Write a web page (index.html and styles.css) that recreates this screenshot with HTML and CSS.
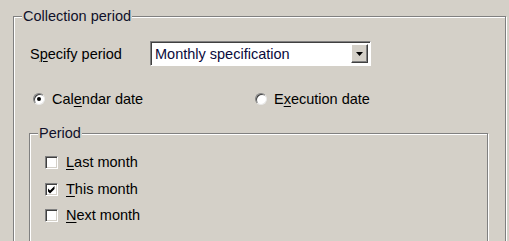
FILE: index.html
```html
<!DOCTYPE html>
<html>
<head>
    <title>Collection period</title>
    <link rel="stylesheet" href="styles.css">
</head>
<body>
    <fieldset class="grupo grupo-externo">
        <legend>Collection period</legend>

        <div class="fila-periodo">
            <span class="etiqueta">S<u>p</u>ecify period</span>
            <div class="combo">
                <span class="combo-texto">Monthly specification</span>
                <span class="combo-boton">
                    <svg width="7" height="4" viewBox="0 0 7 4"><path d="M0 0h7L3.5 4z" fill="#000"/></svg>
                </span>
            </div>
        </div>

        <div class="fila-radios">
            <label class="opcion opcion-calendario">
                <span class="radio marcado"></span>
                <span>Cal<u>e</u>ndar date</span>
            </label>
            <label class="opcion">
                <span class="radio"></span>
                <span>E<u>x</u>ecution date</span>
            </label>
        </div>

        <fieldset class="grupo grupo-interno">
            <legend>Period</legend>
            <label class="casilla-fila">
                <span class="casilla"></span>
                <span><u>L</u>ast month</span>
            </label>
            <label class="casilla-fila">
                <span class="casilla">
                    <svg width="9" height="9" viewBox="0 0 9 9"><path d="M1 3.5l2 2 4.5-4.5v3l-4.5 4.5-2-2z" fill="#000"/></svg>
                </span>
                <span><u>T</u>his month</span>
            </label>
            <label class="casilla-fila">
                <span class="casilla"></span>
                <span><u>N</u>ext month</span>
            </label>
        </fieldset>
    </fieldset>
</body>
</html>
```

FILE: styles.css
```css
body {margin: 0; height: 241px; overflow: hidden; background: #d4d0c8; font-family: Arial, "Liberation Sans", sans-serif; font-size: 14.5px; color: #000;}
u {text-decoration-thickness: 1px; text-underline-offset: 2px;}

.grupo {border: 1px solid #808080; box-shadow: inset 1px 1px 0 #fff, 1px 1px 0 #fff; padding: 0; min-width: 0;}
.grupo legend {background: #d4d0c8; padding: 0 1px; margin-left: 8px; line-height: 15px; color: #10102a;}
.grupo-externo {margin: 9px 3px 0 13px; height: 240px; box-sizing: border-box;}
.grupo-interno {margin: 19px 17px 0 15px; height: 120px; box-sizing: border-box; padding-top: 7px;}

.fila-periodo {display: flex; align-items: center; margin: 17px 0 0 16px;}
.etiqueta {width: 120px;}
.combo {display: flex; width: 221px; height: 25px; box-sizing: border-box; background: #fff; border: 1px solid; border-color: #808080 #fff #fff #808080; box-shadow: inset 1px 1px 0 #404040;}
.combo-texto {flex: 1; padding: 4px 0 0 4px; color: #0a0a3c;}
.combo-boton {width: 17px; margin: 2px 2px 2px 0; box-sizing: border-box; background: #d4d0c8; border: 1px solid; border-color: #fff #404040 #404040 #fff; box-shadow: inset -1px -1px 0 #808080; display: flex; align-items: center; justify-content: center;}

.fila-radios {display: flex; margin: 25px 0 0 19px;}
.opcion {display: flex; align-items: center; gap: 7px;}
.opcion-calendario {width: 222px;}
.radio {width: 12px; height: 12px; box-sizing: border-box; border-radius: 50%; background: #fff; border: 1px solid; border-color: #808080 #e8e8e8 #e8e8e8 #808080; box-shadow: inset 1px 1px 0 #404040; display: flex; align-items: center; justify-content: center;}
.radio.marcado::after {content: ""; width: 4px; height: 4px; border-radius: 50%; background: #000;}

.casilla-fila {display: flex; align-items: center; gap: 8px; margin-left: 15px; height: 26px;}
.casilla-fila:first-of-type {height: 28px;}
.casilla {width: 13px; height: 13px; box-sizing: border-box; background: #fff; border: 1px solid; border-color: #808080 #fff #fff #808080; box-shadow: inset 1px 1px 0 #404040, inset -1px -1px 0 #d4d0c8; display: flex; align-items: center; justify-content: center;}
```
